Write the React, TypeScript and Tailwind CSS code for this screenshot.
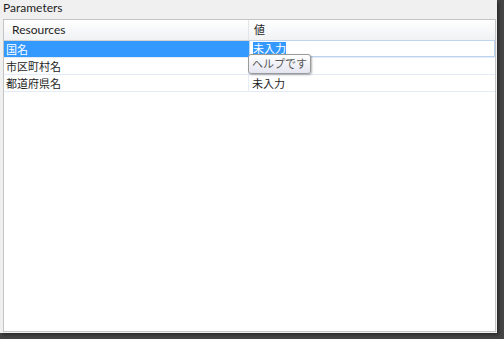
const rows = [
  { name: '国名', value: '未入力', selected: true },
  { name: '市区町村名', value: '', selected: false },
  { name: '都道府県名', value: '未入力', selected: false },
];

export default function App() {
  return (
    <div
      className="w-[504px] h-[339px] bg-[#454545] overflow-hidden"
      style={{ fontFamily: 'Lato, "Noto Sans CJK JP", sans-serif' }}
    >
      <div className="relative w-[497px] h-[333px] bg-[#f0f0f0] flex flex-col shadow-[2px_2px_3px_#2a2a2a]">
        <div className="h-[19px] pl-[3px] text-[12px] leading-[15px] text-[#1e1e1e]">Parameters</div>

        <div className="ml-[3px] w-[493px] h-[313px] border border-[#c4c4c4] bg-white flex flex-col">
          <div className="flex h-[21px] border-b border-[#d2d2d2] bg-gradient-to-b from-white to-[#f1f2f4] text-[12px] text-[#1e1e1e]">
            <div className="w-[245px] border-r border-[#e2e4e8] pl-[8px] leading-[20px]">Resources</div>
            <div className="flex-1 pl-[5px] leading-[20px] text-[11px]">値</div>
          </div>

          {rows.map((r) => (
            <div key={r.name} className="flex h-[17px] border-b border-[#e2ebf6] text-[11px] leading-[17px]">
              <div
                className={
                  r.selected
                    ? 'w-[245px] bg-[#3399ff] text-white pl-[2px]'
                    : 'w-[245px] text-[#1e1e1e] pl-[2px] border-r border-[#e6edf6]'
                }
              >
                {r.name}
              </div>
              {r.selected ? (
                <div className="flex-1 border border-[#bcd4ee] -mt-px pl-[3px] leading-[16px]">
                  <span className="bg-[#3399ff] text-white">{r.value}</span>
                </div>
              ) : (
                <div className="flex-1 pl-[3px] text-[#1e1e1e]">{r.value}</div>
              )}
            </div>
          ))}
        </div>

        <div className="absolute left-[248px] top-[54px] h-[20px] px-[3px] rounded-[3px] border border-[#9a9a9a] bg-gradient-to-b from-white to-[#e4e5f0] shadow-[1px_1px_2px_rgba(0,0,0,0.3)] text-[11px] leading-[18px] text-[#575757]">
          ヘルプです
        </div>
      </div>
    </div>
  );
}
